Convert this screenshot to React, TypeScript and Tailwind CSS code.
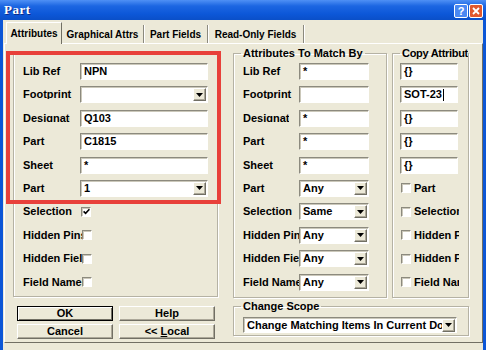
import type { ReactNode } from "react";

const SUNKEN =
  "border border-t-[#8c8a7e] border-l-[#8c8a7e] border-b-white border-r-white shadow-[inset_1px_1px_0_#cbc8ba]";
const RAISED =
  "border border-t-white border-l-white border-b-[#716f64] border-r-[#716f64] shadow-[inset_-1px_-1px_0_#aca899]";
const ETCHED = "border border-[#b5b2a4] shadow-[1px_1px_0_#fff,inset_1px_1px_0_#fff]";

function Box({ w, value, caret }: { w: string; value?: string; caret?: boolean }) {
  return (
    <div className={`${w} flex h-[17px] shrink-0 items-center overflow-hidden whitespace-nowrap bg-white pl-[3px] ${SUNKEN}`}>
      <span className="leading-[13px]">{value}</span>
      {caret && <span className="ml-px h-[12px] w-px bg-black" />}
    </div>
  );
}

function Drop({ w, h = "h-[17px]", value }: { w: string; h?: string; value: string }) {
  return (
    <div className={`${w} ${h} flex shrink-0 items-center bg-white ${SUNKEN}`}>
      <span className="flex-1 overflow-hidden whitespace-nowrap pl-[3px] leading-[13px]">{value}</span>
      <span className={`mr-px flex h-[13px] w-[13px] shrink-0 items-center justify-center bg-[#ece9d8] ${RAISED}`}>
        <svg width="7" height="4" viewBox="0 0 7 4">
          <path d="M0 0h7L3.5 4z" fill="#000" />
        </svg>
      </span>
    </div>
  );
}

function Check({ on }: { on?: boolean }) {
  return (
    <span className={`flex h-[10px] w-[10px] shrink-0 items-center justify-center bg-white ${SUNKEN}`}>
      {on && (
        <svg width="7" height="7" viewBox="0 0 7 7">
          <path d="M0.6 3.4 L2.6 5.4 L6.4 1.2" stroke="#000" strokeWidth="1.6" fill="none" />
        </svg>
      )}
    </span>
  );
}

// labels in this dialog are clipped both in width and just below the baseline
function Row({ label, lw, clip, children }: { label: string; lw: string; clip?: string; children: ReactNode }) {
  return (
    <div className="flex h-[17px] items-center">
      <div className={`${lw} shrink-0 self-start pt-[2px]`}>
        <div className={`${clip ?? ""} h-[10.5px] overflow-hidden whitespace-nowrap leading-[13px]`}>{label}</div>
      </div>
      {children}
    </div>
  );
}

function Btn({ label, primary }: { label: ReactNode; primary?: boolean }) {
  return (
    <div
      className={`flex h-[15px] items-center justify-center bg-[#ece9d8] leading-[13px] ${
        primary ? "border border-black shadow-[inset_1px_1px_0_#fff,inset_-1px_-1px_0_#716f64]" : RAISED
      }`}
    >
      {label}
    </div>
  );
}

export default function App() {
  const tabs = [
    { label: "Graphical Attrs", w: "w-[82px]" },
    { label: "Part Fields", w: "w-[64px]" },
    { label: "Read-Only Fields", w: "w-[96px]" },
  ];

  return (
    <div className="h-[350px] w-[486px] overflow-hidden bg-[#0c56d6] font-['Liberation_Sans',Arial,sans-serif] text-[11px] font-bold text-black">
      {/* title bar */}
      <div className="flex h-[20px] items-center bg-[linear-gradient(to_bottom,#4f90f5_0%,#1c66e2_30%,#0c57d8_70%,#0a4fc8_100%)] pl-[4px] pr-[3px]">
        <span className="font-['Liberation_Serif',serif] text-[13px] leading-[16px] tracking-[0.5px] text-white [text-shadow:1px_1px_0_#0a2a8a]">
          Part
        </span>
        <div className="ml-auto mt-[2px] flex gap-px">
          <span className="flex h-[14px] w-[14px] items-center justify-center rounded-[2px] border border-white bg-[#4a88f2] text-[11px] leading-none text-white">
            ?
          </span>
          <span className="flex h-[14px] w-[14px] items-center justify-center rounded-[2px] border border-white bg-[#e0582e]">
            <svg width="8" height="8" viewBox="0 0 8 8">
              <path d="M1 1L7 7M7 1L1 7" stroke="#fff" strokeWidth="1.8" />
            </svg>
          </span>
        </div>
      </div>

      {/* body */}
      <div className="mx-[3px] h-[330px] bg-[#ece9d8]">
        {/* tabs */}
        <div className="flex h-[23px] items-end pl-[3px] text-[10px]">
          <div className="relative z-10 -mb-px flex h-[22px] w-[56px] items-center justify-center border-l border-t border-r border-l-white border-t-white border-r-[#716f64] bg-[#ece9d8]">
            Attributes
          </div>
          {tabs.map((t) => (
            <div
              key={t.label}
              className={`${t.w} flex h-[18px] items-center justify-center border-r border-r-[#8c8a7e] shadow-[1px_0_0_#fff]`}
            >
              {t.label}
            </div>
          ))}
        </div>

        {/* tab panel */}
        <div className="relative ml-px flex h-[300px] w-[479px] gap-[15px] border border-t-white border-l-white border-r-[#716f64] border-b-[#716f64] pl-[8px] pt-[3px]">
          {/* left column */}
          <div className="flex w-[205px] flex-col">
            <div className={`mt-[6px] flex h-[244px] flex-col gap-[6.4px] pl-[9px] pt-[9px] ${ETCHED}`}>
              <Row label="Lib Ref" lw="w-[57px]">
                <Box w="w-[128px]" value="NPN" />
              </Row>
              <Row label="Footprint" lw="w-[57px]">
                <Drop w="w-[128px]" value="" />
              </Row>
              <Row label="Designator" lw="w-[57px]" clip="w-[47px]">
                <Box w="w-[128px]" value="Q103" />
              </Row>
              <Row label="Part" lw="w-[57px]">
                <Box w="w-[128px]" value="C1815" />
              </Row>
              <Row label="Sheet" lw="w-[57px]">
                <Box w="w-[128px]" value="*" />
              </Row>
              <Row label="Part" lw="w-[57px]">
                <Drop w="w-[128px]" value="1" />
              </Row>
              <Row label="Selection" lw="w-[58px]">
                <Check on />
              </Row>
              <Row label="Hidden Pins" lw="w-[59px]" clip="w-[59px]">
                <Check />
              </Row>
              <Row label="Hidden Fields" lw="w-[59px]" clip="w-[59px]">
                <Check />
              </Row>
              <Row label="Field Names" lw="w-[59px]" clip="w-[59px]">
                <Check />
              </Row>
            </div>

            <div className="mt-[9px] grid grid-cols-[96px_96px] gap-x-[6px] gap-y-[3px] pl-[4px]">
              <Btn label="OK" primary />
              <Btn label="Help" />
              <Btn label="Cancel" />
              <Btn
                label={
                  <span>
                    &lt;&lt; <span className="underline">L</span>ocal
                  </span>
                }
              />
            </div>
          </div>

          {/* right side */}
          <div className="flex flex-col">
            <div className="flex gap-[5px]">
              <fieldset className={`h-[251px] w-[154px] pl-[9px] pt-[3px] ${ETCHED}`}>
                <legend className="-ml-[2px] px-[2px] leading-[13px]">Attributes To Match By</legend>
                <div className="flex flex-col gap-[6.4px]">
                  <Row label="Lib Ref" lw="w-[56px]">
                    <Box w="w-[70px]" value="*" />
                  </Row>
                  <Row label="Footprint" lw="w-[56px]">
                    <Box w="w-[70px]" value="" />
                  </Row>
                  <Row label="Designator" lw="w-[56px]" clip="w-[46px]">
                    <Box w="w-[70px]" value="*" />
                  </Row>
                  <Row label="Part" lw="w-[56px]">
                    <Box w="w-[70px]" value="*" />
                  </Row>
                  <Row label="Sheet" lw="w-[56px]">
                    <Box w="w-[70px]" value="*" />
                  </Row>
                  <Row label="Part" lw="w-[56px]">
                    <Drop w="w-[70px]" value="Any" />
                  </Row>
                  <Row label="Selection" lw="w-[56px]">
                    <Drop w="w-[70px]" value="Same" />
                  </Row>
                  <Row label="Hidden Pins" lw="w-[56px]" clip="w-[56px]">
                    <Drop w="w-[70px]" value="Any" />
                  </Row>
                  <Row label="Hidden Fields" lw="w-[56px]" clip="w-[56px]">
                    <Drop w="w-[70px]" value="Any" />
                  </Row>
                  <Row label="Field Names" lw="w-[56px]" clip="w-[56px]">
                    <Drop w="w-[70px]" value="Any" />
                  </Row>
                </div>
              </fieldset>

              <fieldset className={`h-[251px] w-[77px] pl-[7px] pt-[3px] ${ETCHED}`}>
                <legend className="max-w-[68px] overflow-hidden whitespace-nowrap px-[2px] leading-[13px] tracking-[-0.3px]">
                  Copy Attributes
                </legend>
                <div className="flex flex-col gap-[6.4px]">
                  <Box w="w-[58px]" value="{}" />
                  <Box w="w-[58px]" value="SOT-23" caret />
                  <Box w="w-[58px]" value="{}" />
                  <Box w="w-[58px]" value="{}" />
                  <Box w="w-[58px]" value="{}" />
                  {["Part", "Selection", "Hidden Pins", "Hidden Fields", "Field Names"].map((l) => (
                    <div key={l} className="flex h-[17px] items-center pl-px">
                      <Check />
                      <div className="ml-[3px] mt-[2px] h-[10.5px] w-[45px] self-start overflow-hidden whitespace-nowrap leading-[13px]">
                        {l}
                      </div>
                    </div>
                  ))}
                </div>
              </fieldset>
            </div>

            <fieldset className={`mt-[2px] h-[36px] w-[236px] pl-[9px] pt-[4px] ${ETCHED}`}>
              <legend className="-ml-[2px] px-[2px] leading-[13px]">Change Scope</legend>
              <Drop w="w-[214px]" h="h-[16px]" value="Change Matching Items In Current Document" />
            </fieldset>
          </div>

          {/* red highlight annotation */}
          <div className="pointer-events-none absolute left-[1px] top-[7px] h-[153px] w-[215px] border-[4px] border-[#e8403a]" />
        </div>
      </div>
    </div>
  );
}
